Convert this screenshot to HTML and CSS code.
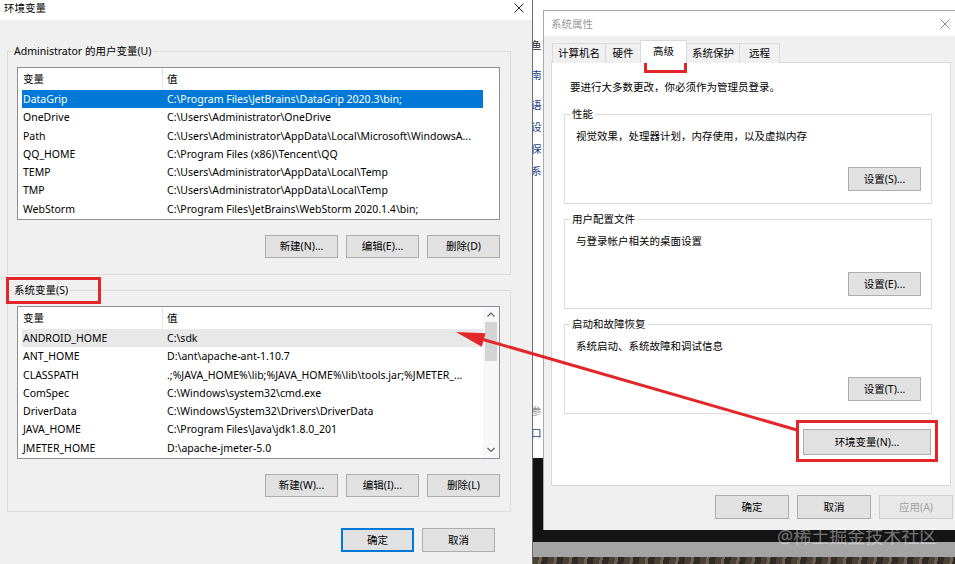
FILE: index.html
```html
<!DOCTYPE html>
<html lang="zh-CN">
  <head>
    <meta charset="UTF-8" />
    <title>环境变量</title>
    <link rel="stylesheet" href="styles.css">
  </head>

  <body>
    <section class="env">
      <header class="env__title">
        <span>环境变量</span>
        <svg class="close" width="10" height="10" viewBox="0 0 10 10"><path d="M0.5 0.5L9.5 9.5M9.5 0.5L0.5 9.5" /></svg>
      </header>

      <fieldset class="group">
        <legend>Administrator 的用户变量(U)</legend>
        <div class="vars">
          <div class="vars__body">
            <div class="vars__head"><span>变量</span><span>值</span></div>
            <div class="vars__row vars__row--active"><span>DataGrip</span><span>C:\Program Files\JetBrains\DataGrip 2020.3\bin;</span></div>
            <div class="vars__row"><span>OneDrive</span><span>C:\Users\Administrator\OneDrive</span></div>
            <div class="vars__row"><span>Path</span><span>C:\Users\Administrator\AppData\Local\Microsoft\WindowsA...</span></div>
            <div class="vars__row"><span>QQ_HOME</span><span>C:\Program Files (x86)\Tencent\QQ</span></div>
            <div class="vars__row"><span>TEMP</span><span>C:\Users\Administrator\AppData\Local\Temp</span></div>
            <div class="vars__row"><span>TMP</span><span>C:\Users\Administrator\AppData\Local\Temp</span></div>
            <div class="vars__row"><span>WebStorm</span><span>C:\Program Files\JetBrains\WebStorm 2020.1.4\bin;</span></div>
          </div>
          <div class="vars__scroll"></div>
        </div>
        <div class="group__btns">
          <button class="btn">新建(N)...</button>
          <button class="btn">编辑(E)...</button>
          <button class="btn">删除(D)</button>
        </div>
      </fieldset>

      <fieldset class="group group--sys">
        <legend>系统变量(S)</legend>
        <div class="vars">
          <div class="vars__body">
            <div class="vars__head"><span>变量</span><span>值</span></div>
            <div class="vars__row vars__row--hover"><span>ANDROID_HOME</span><span>C:\sdk</span></div>
            <div class="vars__row"><span>ANT_HOME</span><span>D:\ant\apache-ant-1.10.7</span></div>
            <div class="vars__row"><span>CLASSPATH</span><span>.;%JAVA_HOME%\lib;%JAVA_HOME%\lib\tools.jar;%JMETER_...</span></div>
            <div class="vars__row"><span>ComSpec</span><span>C:\Windows\system32\cmd.exe</span></div>
            <div class="vars__row"><span>DriverData</span><span>C:\Windows\System32\Drivers\DriverData</span></div>
            <div class="vars__row"><span>JAVA_HOME</span><span>C:\Program Files\Java\jdk1.8.0_201</span></div>
            <div class="vars__row"><span>JMETER_HOME</span><span>D:\apache-jmeter-5.0</span></div>
          </div>
          <div class="vars__scroll vars__scroll--on">
            <svg class="arrow" width="16" height="15" viewBox="0 0 16 15"><path d="M4.5 9.5L8 6L11.5 9.5" /></svg>
            <div class="vars__thumb"></div>
            <svg class="arrow arrow--down" width="16" height="16" viewBox="0 0 16 16"><path d="M4.5 6L8 9.5L11.5 6" /></svg>
          </div>
        </div>
        <div class="group__btns">
          <button class="btn">新建(W)...</button>
          <button class="btn">编辑(I)...</button>
          <button class="btn">删除(L)</button>
        </div>
      </fieldset>

      <div class="env__foot">
        <button class="btn btn--default">确定</button>
        <button class="btn">取消</button>
      </div>
    </section>

    <section class="desk">
      <div class="desk__main">
        <div class="strip">
          <div class="frag frag--first">鱼</div>
          <div class="frag frag--link">南</div>
          <div class="frag frag--link">语</div>
          <div class="frag frag--link frag--near">设</div>
          <div class="frag frag--link frag--near">保</div>
          <div class="frag frag--link frag--near">系</div>
          <div class="frag frag--gray frag--far">参</div>
          <div class="frag frag--link frag--near">口</div>
        </div>

        <div class="sys">
          <header class="sys__title">
            <span>系统属性</span>
            <svg class="close close--dim" width="10" height="10" viewBox="0 0 10 10"><path d="M0.5 0.5L9.5 9.5M9.5 0.5L0.5 9.5" /></svg>
          </header>
          <div class="sys__body">
            <nav class="tabs">
              <span class="tab">计算机名</span>
              <span class="tab">硬件</span>
              <span class="tab tab--on">高级</span>
              <span class="tab">系统保护</span>
              <span class="tab">远程</span>
            </nav>
            <div class="panel">
              <p class="panel__intro">要进行大多数更改，你必须作为管理员登录。</p>
              <fieldset class="pgroup">
                <legend>性能</legend>
                <p>视觉效果，处理器计划，内存使用，以及虚拟内存</p>
                <button class="btn btn--set">设置(S)...</button>
              </fieldset>
              <fieldset class="pgroup">
                <legend>用户配置文件</legend>
                <p>与登录帐户相关的桌面设置</p>
                <button class="btn btn--set">设置(E)...</button>
              </fieldset>
              <fieldset class="pgroup">
                <legend>启动和故障恢复</legend>
                <p>系统启动、系统故障和调试信息</p>
                <button class="btn btn--set">设置(T)...</button>
              </fieldset>
              <button class="btn btn--env">环境变量(N)...</button>
            </div>
            <div class="sys__foot">
              <button class="btn btn--wide">确定</button>
              <button class="btn btn--wide">取消</button>
              <button class="btn btn--wide btn--off">应用(A)</button>
            </div>
          </div>
        </div>
      </div>
      <div class="desk__shade"></div>
      <div class="desk__bar"></div>
      <div class="desk__photo"></div>
      <div class="watermark">@稀土掘金技术社区</div>
    </section>

    <!-- 标注：红框和箭头 -->
    <svg class="marks" width="955" height="564" viewBox="0 0 955 564">
      <rect x="7.5" y="278.5" width="92" height="24" />
      <rect x="645.5" y="43.5" width="40" height="28" />
      <rect x="797.5" y="421.5" width="139" height="39" />
      <line x1="797" y1="430" x2="478" y2="338" />
      <polygon points="456,332 485.6,333.3 481.8,346.7" />
    </svg>
  </body>
</html>
```

FILE: styles.css
```css
* {
  box-sizing: border-box;
}

body {
  margin: 0;
  width: 955px;
  height: 564px;
  overflow: hidden;
  position: relative;
  display: flex;
  background: #fff;
  color: #000;
  font-family: "Noto Sans", "Noto Sans CJK SC", sans-serif;
  font-size: 10.5px;
}

button {
  font: inherit;
  color: inherit;
}

p {
  margin: 0;
}

.close path {
  stroke: #222;
  stroke-width: 1;
  fill: none;
}

.close--dim path {
  stroke: #8a8a8a;
}

/* 左边：环境变量 */
.env {
  width: 533px;
  flex-shrink: 0;
  background: #f0f0f0;
  border-right: 1px solid #6d6d6d;
  display: flex;
  flex-direction: column;
}

.env__title {
  height: 20px;
  background: #fff;
  display: flex;
  justify-content: space-between;
  align-items: flex-start;
  padding: 1px 8px 0 4px;
  line-height: 14px;
}

.env__title .close {
  margin-top: 2px;
}

.group {
  margin: 24px 21px 0 7px;
  padding: 9px 10px 16px 9px;
  border: 1px solid #dcdcdc;
  min-width: 0;
}

.group--sys {
  margin-top: 8px;
  padding-bottom: 14px;
}

.group legend {
  margin-left: -5px;
  padding: 0 2px;
  line-height: 14px;
}

.vars {
  display: flex;
  height: 153px;
  background: #fff;
  border: 1px solid #8c8f96;
}

.vars__body {
  flex: 1;
  padding-left: 4px;
  min-width: 0;
}

.vars__head,
.vars__row {
  display: grid;
  grid-template-columns: 141px 1fr;
  white-space: nowrap;
}

.vars__head {
  height: 22px;
  line-height: 22px;
}

.vars__head span:first-child {
  border-right: 1px solid #e5e5e5;
}

.vars__row {
  height: 18.3px;
  line-height: 18.3px;
}

.vars__head span,
.vars__row span {
  overflow: hidden;
  padding-left: 1px;
}

.vars__head span + span,
.vars__row span + span {
  padding-left: 4px;
}

.vars__row--active {
  background: #0078d7;
  color: #fff;
}

.vars__row--hover {
  background: #e8e8e8;
}

.vars__scroll {
  width: 16px;
  display: flex;
  flex-direction: column;
}

.vars__scroll--on {
  background: #f7f7f7;
}

.vars__thumb {
  height: 39px;
  margin: 0 2px;
  background: #d4d4d4;
}

.arrow {
  display: block;
  flex-shrink: 0;
}

.arrow--down {
  margin-top: auto;
}

.arrow path {
  stroke: #606060;
  stroke-width: 1.2;
  fill: none;
}

.group__btns {
  display: flex;
  justify-content: flex-end;
  gap: 8px;
  margin-top: 15px;
}

.btn {
  width: 73px;
  height: 23px;
  padding: 0;
  background: #e1e1e1;
  border: 1px solid #adadad;
  line-height: 1;
}

.btn--default {
  height: 24px;
  border: 2px solid #0078d7;
}

.env__foot {
  display: flex;
  justify-content: flex-end;
  gap: 8px;
  margin: 16px 37px 0 0;
}

.env__foot .btn {
  height: 24px;
}

/* 右边：系统属性 */
.desk {
  flex: 1;
  position: relative;
  overflow: hidden;
  display: flex;
  flex-direction: column;
}

.desk__main {
  display: flex;
  height: 530px;
  flex-shrink: 0;
}

.strip {
  width: 10px;
  flex-shrink: 0;
  overflow: hidden;
  white-space: nowrap;
  padding-top: 39px;
  background: linear-gradient(#fff 458px, #121212 458px);
}

.frag {
  height: 12px;
  line-height: 12px;
  margin-top: 18px;
  margin-left: -2px;
  color: #222;
}

.frag--first {
  margin-top: 0;
}

.frag--near {
  margin-top: 10px;
}

.frag--far {
  margin-top: 228px;
}

.frag--link {
  color: #1a3d8c;
}

.frag--gray {
  color: #8a8a8a;
}

.sys {
  width: 418px;
  flex-shrink: 0;
  margin-top: 10px;
  border-top: 1px solid #aaa;
  border-left: 1px solid #aaa;
  background: #f0f0f0;
  display: flex;
  flex-direction: column;
}

.sys__title {
  height: 25px;
  background: #fff;
  color: #999;
  display: flex;
  justify-content: space-between;
  align-items: center;
  padding: 0 11px 0 7px;
}

.sys__body {
  padding: 7px 10px 0 7px;
}

.tabs {
  display: flex;
  align-items: flex-end;
  height: 22px;
  margin: -2px 0 -1px 1px;
  position: relative;
  z-index: 1;
}

.tab {
  height: 20px;
  min-width: 36px;
  line-height: 19px;
  text-align: center;
  padding: 0 5px;
  margin-right: -1px;
  border: 1px solid #d9d9d9;
  border-bottom: 0;
  background: #f0f0f0;
}

.tab:last-child {
  padding: 0 9px;
}

.tab--on {
  height: 23px;
  line-height: 20px;
  padding: 0 12px;
  background: #fff;
  position: relative;
  z-index: 2;
}

.panel {
  height: 424px;
  background: #fff;
  border: 1px solid #d9d9d9;
  padding: 17px 18px 0 12px;
}

.panel__intro {
  margin-left: 6px;
  line-height: 14px;
}

.pgroup {
  margin: 13px 0 0;
  padding: 8px 10px 12px 11px;
  border: 1px solid #dcdcdc;
  min-width: 0;
}

.pgroup + .pgroup {
  margin-top: 8px;
}

.pgroup legend {
  margin-left: -6px;
  padding: 0 2px;
  line-height: 14px;
}

.pgroup p {
  line-height: 14px;
}

.btn--set {
  display: block;
  height: 24px;
  margin: 24px 0 0 auto;
}

.btn--env {
  display: block;
  width: 128px;
  height: 26px;
  margin: 15px 1px 0 auto;
}

.sys__foot {
  display: flex;
  justify-content: flex-end;
  gap: 8px;
  margin: 9px -2px 0 0;
}

.btn--wide {
  width: 74px;
  height: 24px;
}

.btn--off {
  color: #a0a0a0;
  background: #e8e8e8;
  border-color: #cfcfcf;
}

.desk__shade {
  height: 12px;
  flex-shrink: 0;
  background: #141414;
}

.desk__bar {
  height: 15px;
  flex-shrink: 0;
  background: #a4a4a4;
}

.desk__photo {
  flex: 1;
  background: repeating-linear-gradient(100deg, #4b4036 0 6px, #6d6050 6px 9px, #2f2a24 9px 15px);
}

.watermark {
  position: absolute;
  left: 244px;
  top: 526px;
  font-size: 18px;
  line-height: 20px;
  color: rgba(255, 255, 255, 0.42);
  white-space: nowrap;
}

/* 标注 */
.marks {
  position: absolute;
  left: 0;
  top: 0;
  pointer-events: none;
}

.marks rect {
  fill: none;
  stroke: #e3262a;
  stroke-width: 3;
}

.marks line {
  stroke: #e3262a;
  stroke-width: 3;
}

.marks polygon {
  fill: #e3262a;
}
```
